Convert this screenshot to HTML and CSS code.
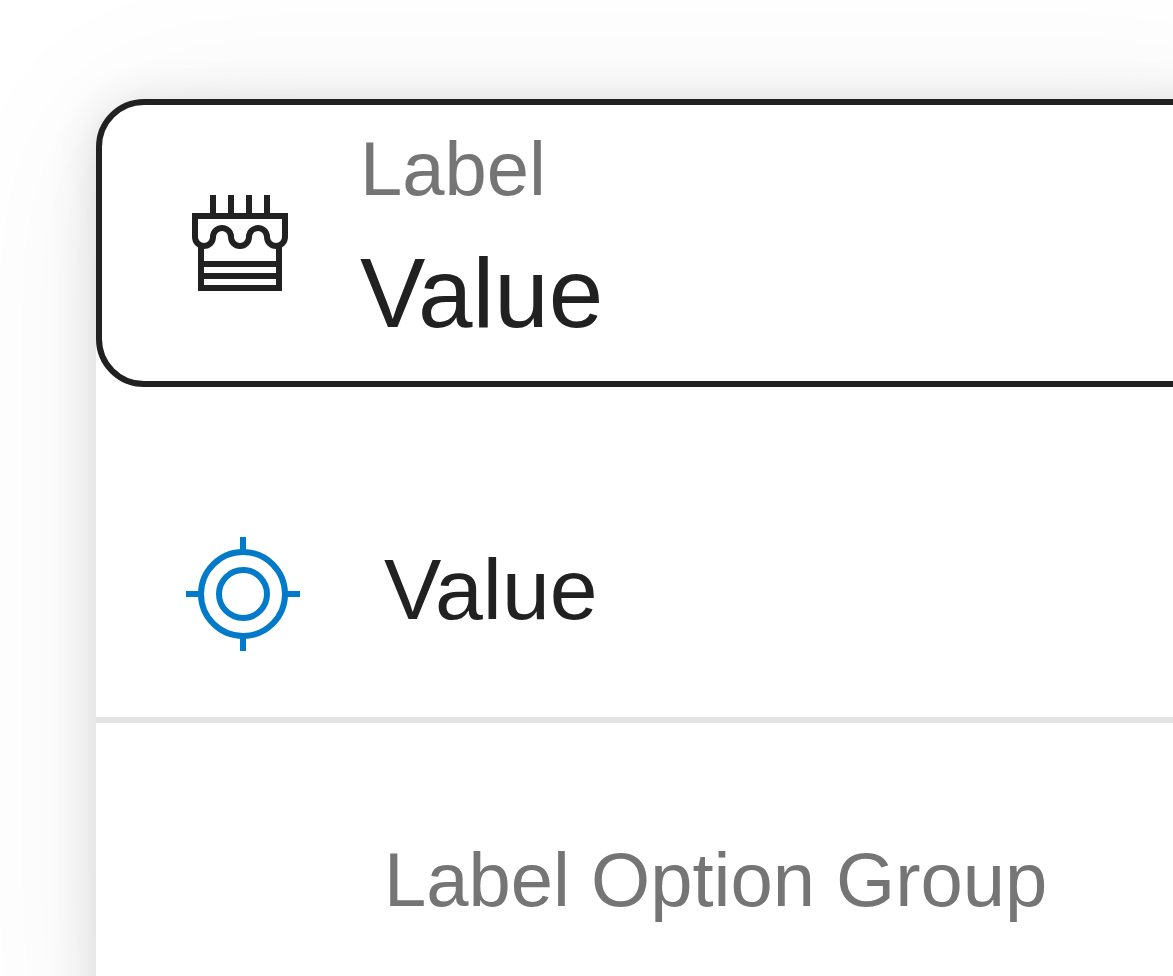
FILE: index.html
```html
<!DOCTYPE html>
<html lang="en">
<head>
<meta charset="utf-8">
<meta name="viewport" content="width=device-width, initial-scale=1">
<title>Select field</title>
<link rel="stylesheet" href="styles.css">
</head>
<body>
<main class="screen">
  <div class="panel">
    <div class="field">
      <svg class="field-icon" viewBox="0 0 96 96" aria-hidden="true">
        <path d="M21 0V18M39 0V18M57 0V18M75 0V18"/>
        <path d="M3 21H93V42A9 9 0 0 1 75 42A9 9 0 0 0 57 42A9 9 0 0 1 39 42A9 9 0 0 0 21 42A9 9 0 0 1 3 42Z"/>
        <path d="M9 50V93H87V50M9 69H87M9 81H87"/>
      </svg>
      <div class="field-text">
        <label class="field-label" for="value">Label</label>
        <input class="field-input" id="value" type="text" value="Value">
      </div>
    </div>
    <button class="option" type="button">
      <svg class="option-icon" viewBox="0 0 114 114" aria-hidden="true">
        <circle cx="57" cy="57" r="42"/>
        <circle cx="57" cy="57" r="24"/>
        <path d="M57 0V14M57 100V114M0 57H14M100 57H114"/>
      </svg>
      <span class="option-text">Value</span>
    </button>
    <h2 class="group-label">Label Option Group</h2>
  </div>
</main>
</body>
</html>
```
FILE: styles.css
```css
* {
  box-sizing: border-box;
}

body {
  margin: 0;
  background: #fff;
  color: #212121;
  font-family: "Liberation Sans", Arial, sans-serif;
}

.screen {
  display: flex;
  flex-direction: column;
  min-height: 100vh;
  overflow: hidden;
}

/* The panel runs past the right and bottom edges of the window. */
.panel {
  flex: 1;
  margin: 99px -96px -96px 96px;
  padding-bottom: 96px;
  border-radius: 48px;
  background: #fff;
  box-shadow: 0 6px 48px rgba(0, 0, 0, 0.14), 0 12px 180px rgba(0, 0, 0, 0.06);
}

.field {
  display: flex;
  align-items: center;
  gap: 72px;
  padding: 0 90px;
  border: 6px solid #212121;
  border-radius: 48px;
  background: #fff;
}

.field-icon,
.option-icon {
  flex: none;
  fill: none;
  stroke: currentColor;
  stroke-width: 6px;
}

.field-icon {
  width: 96px;
  height: 96px;
}

.field-text {
  display: flex;
  flex: 1;
  flex-direction: column;
  gap: 28px;
  min-width: 0;
  padding: 22px 0 34px;
}

.field-label,
.group-label {
  color: #757575;
  font-size: 76px;
  font-weight: 400;
  line-height: 84px;
}

.field-input {
  width: 100%;
  height: 108px;
  padding: 0;
  border: 0;
  outline: 0;
  background: transparent;
  color: inherit;
  font-family: inherit;
  font-size: 98px;
  line-height: 108px;
}

.option {
  display: flex;
  align-items: flex-start;
  gap: 84px;
  width: 100%;
  padding: 150px 90px 66px;
  border: 0;
  border-bottom: 6px solid #e5e5e5;
  background: transparent;
  color: inherit;
  font-family: inherit;
  text-align: left;
}

.option-icon {
  width: 114px;
  height: 114px;
  color: #007ac9;
}

.option-text {
  font-size: 86px;
  line-height: 104px;
}

.group-label {
  margin: 0;
  padding: 115px 90px 0 288px;
}
```
